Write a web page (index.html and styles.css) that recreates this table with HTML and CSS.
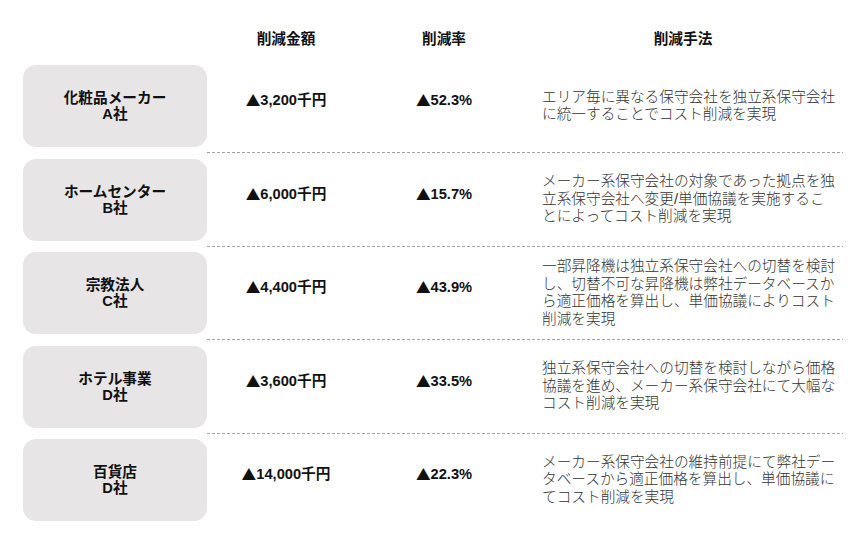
FILE: index.html
```html
<!DOCTYPE html>
<html lang="ja">
<head>
<meta charset="utf-8">
<title>削減実績</title>
<link rel="stylesheet" href="styles.css">
</head>
<body>
<div class="table">
  <div class="head">
    <div></div>
    <div>削減金額</div>
    <div>削減率</div>
    <div>削減手法</div>
  </div>

  <div class="row">
    <div class="name">化粧品メーカー<br>A社</div>
    <div class="num"><span class="tri">▲</span>3,200千円</div>
    <div class="num"><span class="tri">▲</span>52.3%</div>
    <div class="method"><p>エリア毎に異なる保守会社を独立系保守会社に統一することでコスト削減を実現</p></div>
  </div>
  <div class="sep"></div>

  <div class="row">
    <div class="name">ホームセンター<br>B社</div>
    <div class="num"><span class="tri">▲</span>6,000千円</div>
    <div class="num"><span class="tri">▲</span>15.7%</div>
    <div class="method"><p>メーカー系保守会社の対象であった拠点を独立系保守会社へ変更/単価協議を実施することによってコスト削減を実現</p></div>
  </div>
  <div class="sep"></div>

  <div class="row">
    <div class="name">宗教法人<br>C社</div>
    <div class="num"><span class="tri">▲</span>4,400千円</div>
    <div class="num"><span class="tri">▲</span>43.9%</div>
    <div class="method"><p>一部昇降機は独立系保守会社への切替を検討し、切替不可な昇降機は弊社データベースから適正価格を算出し、単価協議によりコスト削減を実現</p></div>
  </div>
  <div class="sep"></div>

  <div class="row">
    <div class="name">ホテル事業<br>D社</div>
    <div class="num"><span class="tri">▲</span>3,600千円</div>
    <div class="num"><span class="tri">▲</span>33.5%</div>
    <div class="method"><p>独立系保守会社への切替を検討しながら価格協議を進め、メーカー系保守会社にて大幅なコスト削減を実現</p></div>
  </div>
  <div class="sep"></div>

  <div class="row">
    <div class="name">百貨店<br>D社</div>
    <div class="num"><span class="tri">▲</span>14,000千円</div>
    <div class="num"><span class="tri">▲</span>22.3%</div>
    <div class="method"><p>メーカー系保守会社の維持前提にて弊社データベースから適正価格を算出し、単価協議にてコスト削減を実現</p></div>
  </div>
</div>
</body>
</html>
```

FILE: styles.css
```css
html, body {
  margin: 0;
  padding: 0;
  background: #ffffff;
}

body {
  font-family: "Liberation Sans", "Noto Sans CJK JP", sans-serif;
  font-size: 14.67px;
  color: #111111;
}

.table {
  width: 820px;
  padding: 29px 24px 0 23px;
}

.head,
.row {
  display: grid;
  grid-template-columns: 184px 158px 158px 320px;
}

.head {
  height: 20px;
  line-height: 20px;
  font-weight: 700;
  text-align: center;
  margin-bottom: 16px;
}

.row {
  height: 82px;
}

.name {
  background: #e7e5e6;
  border-radius: 13px;
  display: flex;
  align-items: center;
  justify-content: center;
  text-align: center;
  font-weight: 700;
  line-height: 16px;
}

.num {
  display: flex;
  align-items: center;
  justify-content: center;
  font-weight: 700;
  line-height: 18px;
  padding-bottom: 12px;
}

.tri {
  font-family: "Noto Sans CJK JP", sans-serif;
  font-weight: 400;
}

.method {
  display: flex;
  align-items: center;
  padding: 0 5px 0 19px;
  color: #333333;
  font-weight: 300;
  line-height: 17.5px;
}

.method p {
  margin: 0;
}

.sep {
  height: 1px;
  margin: 5px 0 5.5px 184px;
  background: repeating-linear-gradient(90deg, #a3a3a3 0 3px, transparent 3px 5px);
}
```
